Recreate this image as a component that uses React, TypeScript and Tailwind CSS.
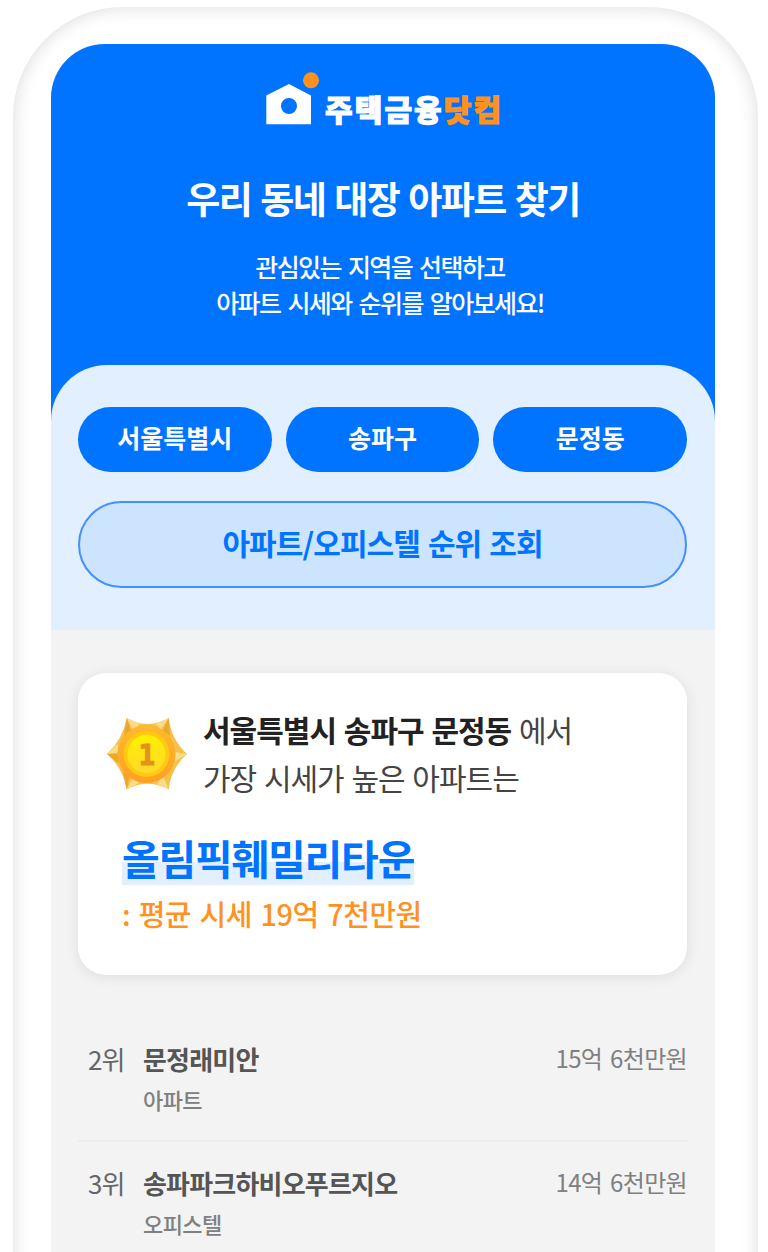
type Rank = {
  rank: number;
  name: string;
  type: string;
  price: string;
};

const regions = ["서울특별시", "송파구", "문정동"];

const ranks: Rank[] = [
  { rank: 2, name: "문정래미안", type: "아파트", price: "15억 6천만원" },
  { rank: 3, name: "송파파크하비오푸르지오", type: "오피스텔", price: "14억 6천만원" },
];

const Logo = () => (
  <div className="flex h-[54px] w-[236px] gap-1">
    <svg width="56" height="54" viewBox="0 0 56 54" className="shrink-0">
      <path
        fillRule="evenodd"
        fill="#fff"
        d="M1.300 23.500 24 12l22 11.500V52.300H1.300ZM24 26a8 8 0 1 0 0 16 8 8 0 0 0 0-16Z"
      />
      <circle cx="46" cy="8.300" r="8" fill="#ff921e" />
    </svg>
    <p className="mt-[16px] text-[30px] leading-[40px] font-black tracking-[2.100px] whitespace-nowrap text-white [-webkit-text-stroke:1.100px_currentColor]">
      주택금융<span className="text-[#ff921e]">닷컴</span>
    </p>
  </div>
);

const Medal = () => (
  <svg width="82" height="74" viewBox="0 0 82 74" className="shrink-0">
    <defs>
      <linearGradient id="ring" x1="0" y1="0" x2="0" y2="1">
        <stop offset="0" stopColor="#ffb92e" />
        <stop offset="1" stopColor="#ff9f22" />
      </linearGradient>
      <linearGradient id="face" x1="0" y1="0" x2="0" y2="1">
        <stop offset="0" stopColor="#fff000" />
        <stop offset="1" stopColor="#ffd92c" />
      </linearGradient>
    </defs>
    {/* points */}
    <path
      fill="#f5c14a"
      d="M20.700 1Q41 13 62.700 1 65 22 81 37 65 51 62.700 72.500 41 61 20.700 72.500 17 51 1 37 17 22 20.700 1Z"
    />
    <path
      fill="#fbdc86"
      d="M20.700 1 27 13l7-6ZM62.700 1 55 12l-6-5ZM1 37l14-2-4-8ZM81 37l-13-2v10ZM20.700 72.500 27 60l6 6ZM62.700 72.500 57 58l-6 9Z"
    />
    <path
      fill="#eaa92a"
      d="m20.700 1 5 14-8 5ZM62.700 1 56 15l8 4ZM1 37h13l-2 9ZM20.700 72.500 24 58l-7-3Z"
    />
    <circle cx="40.500" cy="37" r="29" fill="url(#ring)" />
    <circle cx="40.500" cy="37" r="23" fill="#ffca13" />
    <circle cx="40.500" cy="37" r="19" fill="url(#face)" />
    <text
      x="41"
      y="48"
      textAnchor="middle"
      fontFamily="DejaVu Sans"
      fontWeight="700"
      fontSize="28"
      textLength="17"
      lengthAdjust="spacingAndGlyphs"
      fill="#e69119"
      stroke="#e69119"
    >
      1
    </text>
  </svg>
);

const RankRow = ({ item }: { item: Rank }) => (
  <li className="flex h-[124px] border-b-2 border-[#ededed] pt-[21px] pl-[10px] text-[#555]">
    <span className="w-[55px] text-[26px] leading-[40px] tracking-[-1px] text-[#666]">
      {item.rank}위
    </span>
    <div className="flex-1">
      <p className="text-[26px] leading-[40px] font-bold tracking-[-0.800px] whitespace-nowrap">
        {item.name}
      </p>
      <p className="text-[22px] leading-[40px] font-medium tracking-[-0.600px] text-[#808080]">
        {item.type}
      </p>
    </div>
    <span className="text-[24px] leading-[38px] tracking-[-0.650px] [word-spacing:3px] whitespace-nowrap text-[#808080]">
      {item.price}
    </span>
  </li>
);

const App = () => {
  return (
    <div className="h-[1252px] w-[768px] overflow-hidden bg-white pt-[7px] pl-[13px] font-['Noto_Sans_CJK_KR',sans-serif]">
      {/* phone frame */}
      <div className="h-[1400px] w-[745px] rounded-[110px] bg-white pt-[37px] pr-[43px] pl-[38px] shadow-[inset_0_0_18px_rgba(0,0,0,0.15)]">
        <div className="h-full overflow-hidden rounded-t-[54px] bg-[#f3f3f3]">
          <header className="flex h-[321px] flex-col items-center bg-[#0073ff] pt-[28px] text-center text-white">
            <Logo />
            <h1 className="mt-[44px] text-[37px] leading-[56px] font-bold tracking-[-1.500px] [word-spacing:2px] whitespace-nowrap">
              우리 동네 대장 아파트 찾기
            </h1>
            <p className="mt-[22px] pr-[6px] text-[25px] leading-[36px] font-medium tracking-[-1.600px] [word-spacing:3px] whitespace-nowrap">
              관심있는 지역을 선택하고
              <br />
              아파트 시세와 순위를 알아보세요!
            </p>
          </header>

          {/* region select */}
          <section className="bg-[#0073ff]">
            <div className="flex h-[265px] flex-col gap-[29px] rounded-t-[56px] bg-[#e2efff] pt-[42px] pr-[28px] pl-[27px]">
              <div className="grid grid-cols-3 gap-[14px]">
                {regions.map((region) => (
                  <button
                    key={region}
                    className="h-[65px] rounded-full bg-[#0073ff] pb-[3px] text-[25px] font-bold text-white"
                  >
                    {region}
                  </button>
                ))}
              </div>
              <button className="h-[87px] rounded-full border-2 border-[#458fff] bg-[#cde4ff] pb-[4px] text-[30px] font-bold tracking-[-0.900px] [word-spacing:2px] text-[#0073ff]">
                아파트/오피스텔 순위 조회
              </button>
            </div>
          </section>

          <main className="pt-[43px] pr-[28px] pl-[27px]">
            {/* first place */}
            <section className="h-[302px] rounded-[28px] bg-white pt-[32px] shadow-[0_2px_14px_rgba(0,0,0,0.09)]">
              <div className="flex pl-[28px]">
                <div className="pt-[12px]">
                  <Medal />
                </div>
                <p className="ml-[15px] text-[30px] leading-[48px] tracking-[-1px] [word-spacing:2px] whitespace-nowrap text-[#444]">
                  <strong className="font-bold text-[#222]">서울특별시 송파구 문정동</strong> 에서
                  <br />
                  가장 시세가 높은 아파트는
                </p>
              </div>
              <div className="pl-[44px]">
                <h2 className="mt-[26px] w-fit bg-[linear-gradient(transparent_35px,#e2efff_35px,#e2efff_58px,transparent_58px)] text-[41px] leading-[60px] font-bold tracking-[-1.200px] text-[#0073ff]">
                  올림픽훼밀리타운
                </h2>
                <p className="mt-[2px] text-[29px] leading-[48px] font-medium tracking-[-0.500px] [word-spacing:2.500px] text-[#ff921e]">
                  : 평균 시세 19억 7천만원
                </p>
              </div>
            </section>

            <ul className="mt-[43px]">
              {ranks.map((item) => (
                <RankRow key={item.rank} item={item} />
              ))}
            </ul>
          </main>
        </div>
      </div>
    </div>
  );
};

export default App;
